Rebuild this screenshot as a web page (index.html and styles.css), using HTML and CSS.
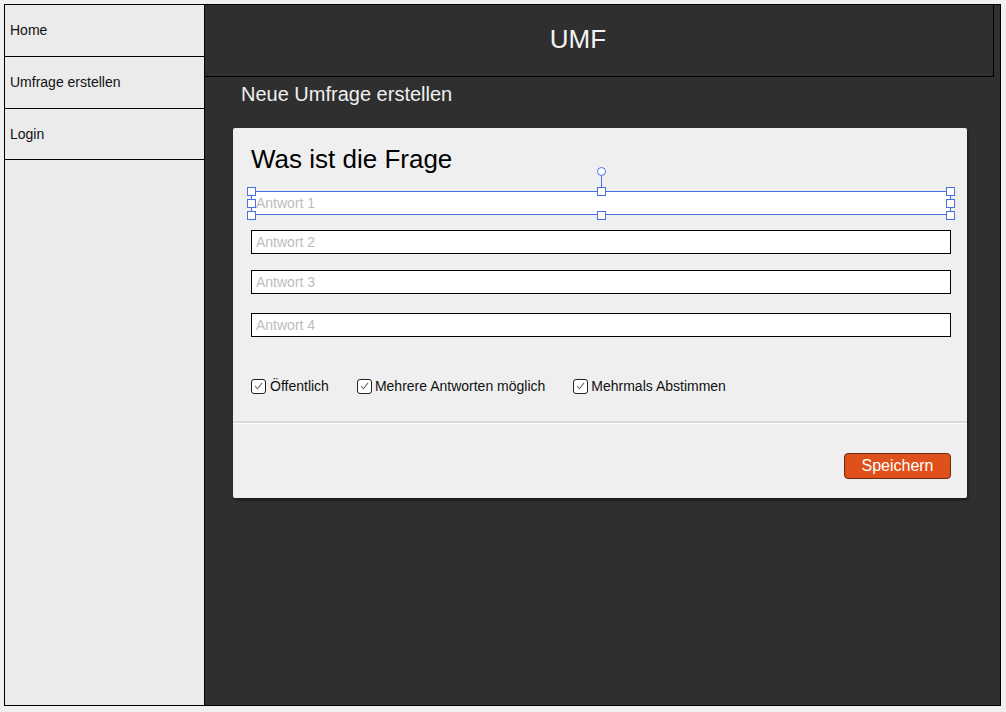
FILE: index.html
```html
<!DOCTYPE html>
<html lang="de">
<head>
<meta charset="utf-8">
<title>UMF</title>
<link rel="stylesheet" href="styles.css">
</head>
<body>
<div class="frame">
  <nav class="sidebar">
    <a class="nav-item">Home</a>
    <a class="nav-item">Umfrage erstellen</a>
    <a class="nav-item nav-last">Login</a>
  </nav>
  <main class="main">
    <header class="header">UMF</header>
    <h2 class="page-title">Neue Umfrage erstellen</h2>
    <section class="card">
      <div class="card-body">
        <h1 class="question">Was ist die Frage</h1>
        <div class="answers">
          <div class="answer-wrap">
            <input class="answer selected" placeholder="Antwort 1">
            <span class="rotate-line"></span>
            <span class="rotate-knob"></span>
            <span class="handle h-tl"></span>
            <span class="handle h-tm"></span>
            <span class="handle h-tr"></span>
            <span class="handle h-ml"></span>
            <span class="handle h-mr"></span>
            <span class="handle h-bl"></span>
            <span class="handle h-bm"></span>
            <span class="handle h-br"></span>
          </div>
          <input class="answer answer-3rd" placeholder="Antwort 2">
          <input class="answer answer-3rd" placeholder="Antwort 3">
          <input class="answer answer-last" placeholder="Antwort 4">
        </div>
        <div class="options">
          <label class="option opt-1"><span class="check"><svg viewBox="0 0 14 14" width="14" height="14"><path d="M3.3 7.2 L5.9 10 L10.8 3.6" fill="none" stroke="#666" stroke-width="1.1"/></svg></span><span class="opt-text">Öffentlich</span></label>
          <label class="option opt-2"><span class="check"><svg viewBox="0 0 14 14" width="14" height="14"><path d="M3.3 7.2 L5.9 10 L10.8 3.6" fill="none" stroke="#666" stroke-width="1.1"/></svg></span><span class="opt-text">Mehrere Antworten möglich</span></label>
          <label class="option opt-3"><span class="check"><svg viewBox="0 0 14 14" width="14" height="14"><path d="M3.3 7.2 L5.9 10 L10.8 3.6" fill="none" stroke="#666" stroke-width="1.1"/></svg></span><span class="opt-text">Mehrmals Abstimmen</span></label>
        </div>
      </div>
      <div class="divider"></div>
      <div class="card-footer">
        <button class="save">Speichern</button>
      </div>
    </section>
  </main>
</div>
</body>
</html>
```

FILE: styles.css
```css
* { box-sizing: border-box; }
html, body { margin: 0; padding: 0; }
body {
  background: #f0f0f0;
  font-family: "Liberation Sans", Arial, sans-serif;
}
.frame {
  margin: 4px 0 0 4px;
  width: 997px;
  height: 702px;
  border: 1px solid #000;
  display: flex;
  background: #2f2f2f;
}
.sidebar {
  width: 200px;
  flex: none;
  background: #ebebeb;
  border-right: 1px solid #000;
  display: flex;
  flex-direction: column;
}
.nav-item {
  height: 52px;
  border-bottom: 1px solid #000;
  padding: 0 0 2px 5px;
  display: flex;
  align-items: center;
  font-size: 14px;
  color: #111;
}
.nav-last { height: 51px; padding-bottom: 0; }
.main {
  flex: 1;
  display: flex;
  flex-direction: column;
  align-items: flex-start;
}
.header {
  width: 789px;
  height: 72px;
  border-right: 1px solid #000;
  border-bottom: 1px solid #000;
  display: flex;
  align-items: center;
  justify-content: center;
  padding: 0 42px 2px 0;
  color: #f4f4f4;
  font-size: 26px;
}
.page-title {
  margin: 5px 0 0 36px;
  font-size: 20px;
  line-height: 24px;
  font-weight: normal;
  color: #f0f0f0;
}
.card {
  margin: 22px 0 0 28px;
  width: 734px;
  height: 370px;
  background: #efefef;
  border-radius: 2px;
  box-shadow: 1px 2px 3px rgba(0,0,0,0.5);
  display: flex;
  flex-direction: column;
}
.card-body {
  padding: 16px 16px 0 18px;
}
.question {
  margin: 0;
  font-size: 26px;
  line-height: 30px;
  font-weight: normal;
  color: #000;
}
.answers {
  margin-top: 17px;
  display: flex;
  flex-direction: column;
  gap: 15px;
}
.answer-wrap {
  position: relative;
  width: 700px;
  height: 24px;
}
.answer {
  display: block;
  width: 700px;
  height: 24px;
  margin: 0;
  border: 1px solid #000;
  background: #fff;
  padding: 0 4px;
  font-family: "Liberation Sans", Arial, sans-serif;
  font-size: 14px;
  color: #333;
  outline: none;
}
.answer::placeholder { color: #bdbdbd; }
.answer.selected { border-color: #4a6fe3; }
.answer-3rd + .answer-3rd { margin-top: 1px; }
.answer-last { margin-top: 4px; }
.handle {
  position: absolute;
  width: 9px;
  height: 9px;
  background: #fff;
  border: 1px solid #4a6fe3;
}
.h-tl { left: -4px; top: -4px; }
.h-tm { left: 346px; top: -4px; }
.h-tr { right: -4px; top: -4px; }
.h-ml { left: -4px; top: 8px; }
.h-mr { right: -4px; top: 8px; }
.h-bl { left: -4px; bottom: -5px; }
.h-bm { left: 346px; bottom: -5px; }
.h-br { right: -4px; bottom: -5px; }
.rotate-line {
  position: absolute;
  left: 350px;
  top: -16px;
  width: 1px;
  height: 12px;
  background: #4a6fe3;
}
.rotate-knob {
  position: absolute;
  left: 346px;
  top: -24px;
  width: 9px;
  height: 9px;
  border-radius: 50%;
  background: #fff;
  border: 1px solid #4a6fe3;
}
.options {
  margin-top: 39px;
  height: 20px;
  display: flex;
  align-items: center;
}
.option {
  display: flex;
  align-items: center;
  font-size: 14px;
  color: #111;
}
.opt-1 { margin-right: 28px; }
.opt-2 { margin-right: 28px; }
.check {
  width: 15px;
  height: 15px;
  flex: none;
  border: 1px solid #222;
  border-radius: 3px;
  background: #fff;
  display: flex;
  align-items: center;
  justify-content: center;
  margin-right: 3px;
}
.check svg { display: block; }
.opt-1 .check { margin-right: 4px; }
.divider {
  margin-top: 25px;
  height: 3px;
  background: linear-gradient(#d9d9d9 0, #d9d9d9 2px, #fff 2px, #fff 3px);
}
.card-footer {
  flex: 1;
  display: flex;
  justify-content: flex-end;
  align-items: flex-start;
  padding: 29px 16px 0 0;
}
.save {
  width: 107px;
  height: 26px;
  background: #e0501b;
  border: 1px solid #6a2a14;
  border-radius: 4px;
  color: #fff;
  font-family: "Liberation Sans", Arial, sans-serif;
  font-size: 16px;
  padding: 0;
}
```
